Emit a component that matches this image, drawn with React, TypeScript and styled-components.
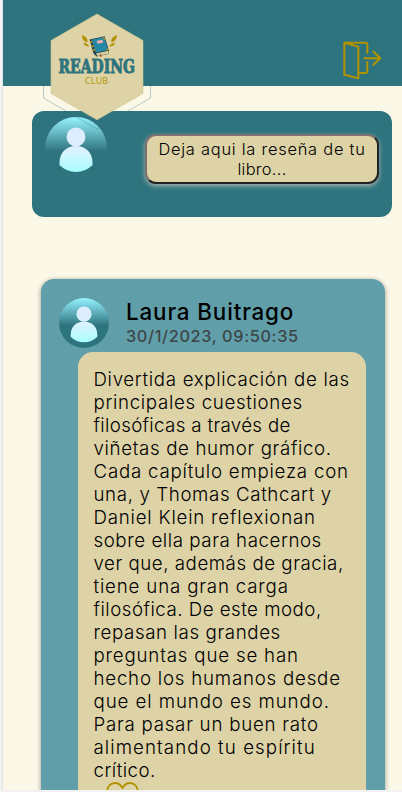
import React from 'react';
import styled, { createGlobalStyle } from 'styled-components';

const teal = '#2e747e';
const cardTeal = '#609fa9';
const sand = '#ddd3a6';
const gold = '#b39200';
const cream = '#fcf8e7';

const GlobalStyle = createGlobalStyle`
  * { box-sizing: border-box; }
  body {
    margin: 0;
    overflow: hidden;
    background: #f2f2f2;
    font-family: Inter, "Open Sans", sans-serif;
    color: #000;
  }
`;

const Page = styled.main`
  display: flex;
  flex-direction: column;
  height: 790px;
  margin-left: 2px;
  border-left: 1px solid #e0e4e8;
  overflow: hidden;
  background: ${cream};
`;

const Header = styled.header`
  position: relative;
  display: flex;
  flex: none;
  justify-content: flex-end;
  height: 86px;
  padding: 41px 20px 0 0;
  background: ${teal};
`;

const LogoBadge = styled.svg`
  position: absolute;
  left: 37px;
  top: 10px;
  z-index: 2;
  width: 114px;
  height: 124px;
  overflow: visible;
`;

const ExitIcon = styled.svg`
  width: 39px;
  height: 39px;
  overflow: visible;
  fill: none;
  stroke: ${gold};
  stroke-width: 6;
  stroke-linecap: round;
  stroke-linejoin: round;
`;

const Composer = styled.section`
  display: flex;
  flex: none;
  justify-content: space-between;
  align-items: flex-start;
  height: 106px;
  margin: 25px 10px 0 29px;
  padding: 6px 13px;
  border-radius: 12px;
  background: ${teal};
`;

const ReviewButton = styled.button`
  display: flex;
  flex-direction: column;
  align-items: center;
  width: 234px;
  height: 50px;
  margin-top: 17px;
  padding: 3px 0 0;
  border: 2px solid;
  border-color: #7c7070 #222 #222 #7c7070;
  border-radius: 11px;
  background: ${sand};
  box-shadow: 0 2px 5px rgba(221, 205, 190, 0.7);
  font: 300 16.4px/20px Inter, sans-serif;
  color: #000;
`;

const Line = styled.span<{ $spacing: number }>`
  display: block;
  white-space: nowrap;
  letter-spacing: ${(p) => p.$spacing}px;
`;

const Review = styled.article`
  flex: 1 0 600px;
  margin: 62px 17px 0 38px;
  padding: 19px 19px 0 18px;
  border-radius: 13px;
  background: ${cardTeal};
  box-shadow: 0 1px 5px rgba(0, 0, 0, 0.4);
`;

const Author = styled.div`
  display: flex;
  gap: 17px;
  height: 54px;
`;

const AuthorName = styled.h2`
  margin: 1px 0 0;
  font-size: 22.4px;
  font-weight: 500;
  line-height: 26px;
`;

const PostedAt = styled.time`
  display: block;
  margin-top: 1px;
  font-size: 16.3px;
  font-weight: 500;
  line-height: 20px;
  color: #3d4548;
`;

const Quote = styled.div`
  height: 500px;
  margin-left: 19px;
  padding: 16px 16px 0 15.5px;
  border-radius: 15px;
  background: ${sand};
  font-size: 18.7px;
  font-weight: 300;
  line-height: 23px;
`;

const LikeIcon = styled.svg`
  display: block;
  width: 33px;
  height: 30px;
  margin-left: 12px;
  fill: none;
  stroke: ${gold};
  stroke-width: 1.8;
`;

const AvatarSvg = styled.svg<{ $size: number }>`
  flex: none;
  width: ${(p) => p.$size}px;
  height: ${(p) => p.$size}px;
`;

function Avatar({ size, id }: { size: number; id: string }) {
  return (
    <AvatarSvg $size={size} viewBox="0 0 62 62">
      <defs>
        <linearGradient id={`${id}-sky`} x1="0" y1="0" x2="0" y2="1">
          <stop offset="0" stopColor="#96f3ff" />
          <stop offset="0.55" stopColor={teal} />
        </linearGradient>
        <linearGradient id={`${id}-body`} x1="0" y1="0" x2="0" y2="1">
          <stop offset="0" stopColor="#e2f0ff" />
          <stop offset="1" stopColor="#a8ffff" />
        </linearGradient>
      </defs>
      <circle cx="31" cy="31" r="31" fill={`url(#${id}-sky)`} />
      <circle cx="31" cy="20" r="9.4" fill="#dcedff" />
      <path d="M14.5 45.5C14.5 35 22 29 31 29S47.500 35 47.500 45.500V48Q40.500 55 31 55T14.500 48Z" fill={`url(#${id}-body)`} />
    </AvatarSvg>
  );
}

function Logo() {
  return (
    <LogoBadge viewBox="40 10 114 124">
      <path d="M43.500 86V98L97 129L150.500 98V86" fill="none" stroke={teal} strokeWidth="0.7" strokeOpacity="0.5" />
      <path d="M97 14L143 40.500V93.500L97 119.800L51 93.500V40.500Z" fill={sand} stroke="#cfc68f" strokeWidth="0.6" />
      <g fill={gold}>
        <path d="M82.200 35C86.500 37 88.500 40 87 42.500C83.500 41 81.500 38.500 82.200 35Z" />
        <path d="M83.300 42.700C86.500 43 88.500 44.500 89.300 46.500C86.500 46.500 84.200 45.500 83.300 42.700Z" />
        <path d="M116.600 35C112.300 37 110.300 40 111.700 42.500C115 41 117.200 38.500 116.600 35Z" />
        <path d="M115.300 42.700C112 43 110 44.500 109 46.500C112 46.500 114.400 45.500 115.300 42.700Z" />
      </g>
      <path d="M89.500 39.500L104.500 36.200L109 50.500L108.500 54L96.500 56.500L93.500 53.500Z" fill="#24464f" />
      <path d="M96 53.500L108.500 50.800V53.700L97.500 56Z" fill="#dccf9b" />
      <path d="M91.800 39.800L104 37L108.200 50L95.800 52.700Z" fill="#2588a4" />
      <path d="M96.500 41L102 39.800L103.400 42.400L97.800 43.700Z" fill="#f3b1b5" />
      <path d="M90 42.500L92.500 41.500M91.500 46.500L94 45.800M92.600 50.300L95.500 49.500M103 37.800L105 39.500M106.500 50.300L108.500 48.500" stroke="#c49a22" strokeWidth="1.4" />
      <path d="M100.500 54L101 57" stroke="#a9472c" strokeWidth="1.200" />
      <text
        x="58.500"
        y="73.200"
        fill={teal}
        stroke={teal}
        strokeWidth="0.9"
        fontFamily="DejaVu Serif"
        fontWeight="700"
        fontSize="18"
        textLength="76.500"
        lengthAdjust="spacingAndGlyphs"
      >
        READING
      </text>
      <text x="85" y="83.600" fill={gold} fontFamily="Open Sans" fontWeight="500" fontSize="8.800" textLength="23" lengthAdjust="spacing">
        CLUB
      </text>
    </LogoBadge>
  );
}

const reviewLines: { text: string; spacing: number }[] = [
  { text: 'Divertida explicación de las', spacing: 0.675 },
  { text: 'principales cuestiones', spacing: 0.67 },
  { text: 'filosóficas a través de', spacing: 0.35 },
  { text: 'viñetas de humor gráfico.', spacing: 0.65 },
  { text: 'Cada capítulo empieza con', spacing: 0.775 },
  { text: 'una, y Thomas Cathcart y', spacing: 0.62 },
  { text: 'Daniel Klein reflexionan', spacing: 0.785 },
  { text: 'sobre ella para hacernos', spacing: 0.57 },
  { text: 'ver que, además de gracia,', spacing: 0.54 },
  { text: 'tiene una gran carga', spacing: 0.83 },
  { text: 'filosófica. De este modo,', spacing: 0.5 },
  { text: 'repasan las grandes', spacing: 0.62 },
  { text: 'preguntas que se han', spacing: 0.82 },
  { text: 'hecho los humanos desde', spacing: 0.78 },
  { text: 'que el mundo es mundo.', spacing: 0.91 },
  { text: 'Para pasar un buen rato', spacing: 0.755 },
  { text: 'alimentando tu espíritu', spacing: 1.08 },
  { text: 'crítico.', spacing: 0.47 },
];

export default function App() {
  return (
    <>
      <GlobalStyle />
      <Page>
        <Header>
          <Logo />
          <ExitIcon viewBox="69 63 117 117">
            <path d="M73 68L115 80V175L73 164Z" />
            <path d="M75 68H136Q142 68 142 74V99M142 126V153Q142 159 136 159H116" />
            <path d="M133 114.500H181M160 94.500L181 114.500L160 134.500" />
          </ExitIcon>
        </Header>
        <Composer>
          <Avatar size={62} id="me" />
          <ReviewButton type="button">
            <Line $spacing={0.77}>Deja aqui la reseña de tu</Line>
            <Line $spacing={0.3}>libro...</Line>
          </ReviewButton>
        </Composer>
        <Review>
          <Author>
            <Avatar size={50} id="author" />
            <div>
              <AuthorName>
                <Line $spacing={0.86}>Laura Buitrago</Line>
              </AuthorName>
              <PostedAt>
                <Line $spacing={0.64}>30/1/2023, 09:50:35</Line>
              </PostedAt>
            </div>
          </Author>
          <Quote>
            {reviewLines.map((line) => (
              <Line key={line.text} $spacing={line.spacing}>
                {line.text}
              </Line>
            ))}
            <LikeIcon viewBox="0 0 33 30">
              <path d="M16.500 5.800C14.500 2.500 12 1 9 1C4.500 1 1.300 4.500 1.300 9C1.300 17 9 22 16.500 28C24 22 31.700 17 31.700 9C31.700 4.500 28.500 1 24 1C21 1 18.500 2.500 16.500 5.800Z" />
            </LikeIcon>
          </Quote>
        </Review>
      </Page>
    </>
  );
}
